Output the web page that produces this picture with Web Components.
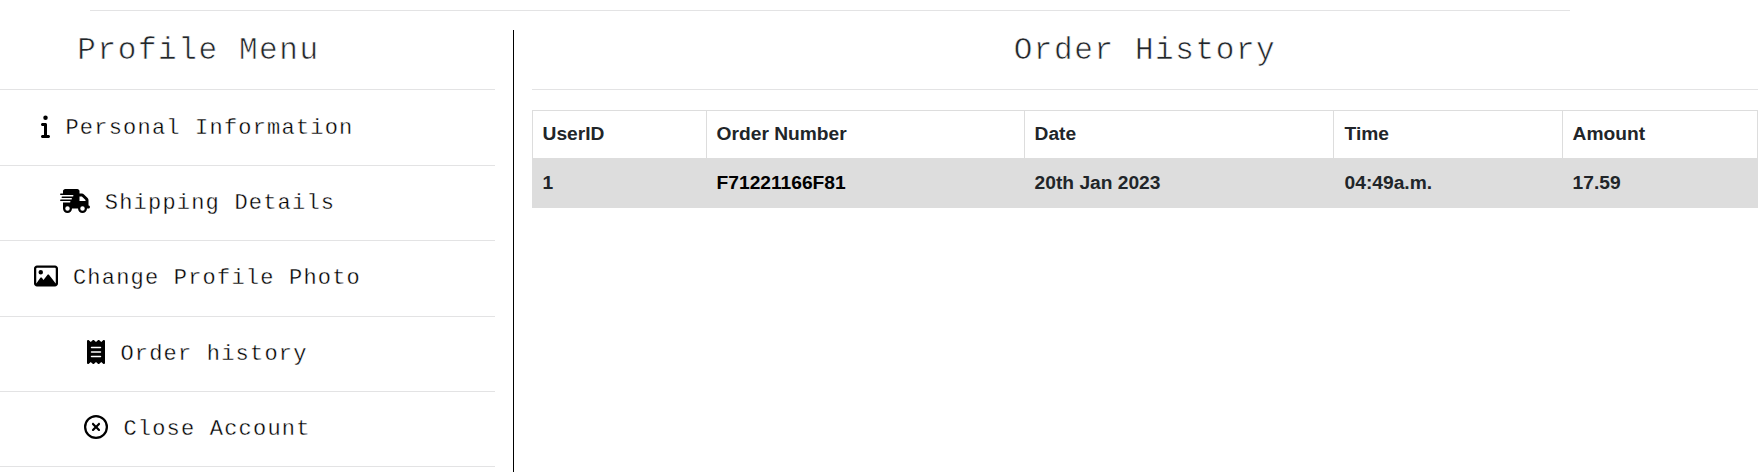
<!DOCTYPE html>
<html lang="en">
<head>
<meta charset="utf-8">
<title>Order History</title>
<style>
html, body { margin: 0; height: 100%; background: #fff; overflow: hidden; }
body { color: #212529; font-family: "Liberation Sans", Arial, sans-serif; }
</style>
</head>
<body>
<profile-page>
  <profile-menu slot="menu">
    <section-title slot="title">Profile Menu</section-title>
    <menu-item icon="info">Personal Information</menu-item>
    <menu-item icon="truck">Shipping Details</menu-item>
    <menu-item icon="image">Change Profile Photo</menu-item>
    <menu-item icon="receipt">Order history</menu-item>
    <menu-item icon="close">Close Account</menu-item>
  </profile-menu>
  <section-title slot="heading">Order History</section-title>
  <order-table></order-table>
</profile-page>
<script>
const shadow = (el, html) => { el.attachShadow({ mode: "open" }).innerHTML = html; };

const ICONS = {
  info: [192, "M48 80a48 48 0 1 1 96 0A48 48 0 1 1 48 80zM0 224c0-17.7 14.3-32 32-32H96c17.7 0 32 14.3 32 32V448h32c17.7 0 32 14.3 32 32s-14.3 32-32 32H32c-17.7 0-32-14.3-32-32s14.3-32 32-32H64V256H32c-17.7 0-32-14.3-32-32z"],
  truck: [640, "M112 0C85.5 0 64 21.5 64 48V96H16c-8.8 0-16 7.2-16 16s7.2 16 16 16H64 272c8.8 0 16 7.2 16 16s-7.2 16-16 16H64 48c-8.8 0-16 7.2-16 16s7.2 16 16 16H64 240c8.8 0 16 7.2 16 16s-7.2 16-16 16H64 16c-8.8 0-16 7.2-16 16s7.2 16 16 16H64 208c8.8 0 16 7.2 16 16s-7.2 16-16 16H64V416c0 53 43 96 96 96s96-43 96-96H384c0 53 43 96 96 96s96-43 96-96h32c17.7 0 32-14.3 32-32s-14.3-32-32-32V288 256 237.3c0-17-6.7-33.3-18.7-45.3L512 114.7c-12-12-28.3-18.7-45.3-18.7H416V48c0-26.5-21.5-48-48-48H112zM544 237.3V256H416V160h50.7L544 237.3zM160 368a48 48 0 1 1 0 96 48 48 0 1 1 0-96zm272 48a48 48 0 1 1 96 0 48 48 0 1 1 -96 0z"],
  image: [512, "M448 80c8.8 0 16 7.2 16 16V415.8l-5-6.5-136-176c-4.5-5.9-11.6-9.3-19-9.3s-14.4 3.4-19 9.3L202 340.7l-30.5-42.7C167 291.7 159.8 288 152 288s-15 3.7-19.5 10.1l-80 112L48 416.3l0-.3V96c0-8.8 7.2-16 16-16H448zM64 32C28.7 32 0 60.7 0 96V416c0 35.3 28.7 64 64 64H448c35.3 0 64-28.7 64-64V96c0-35.3-28.7-64-64-64H64zm80 192a48 48 0 1 0 0-96 48 48 0 1 0 0 96z"],
  receipt: [384, "M14 2.2C22.5-1.7 32.5-.3 39.6 5.8L80 40.4 120.4 5.8c9-7.7 22.3-7.7 31.2 0L192 40.4 232.4 5.8c9-7.7 22.3-7.7 31.2 0L304 40.4 344.4 5.8c7.1-6.1 17.1-7.5 25.6-3.6s14 12.4 14 21.8V488c0 9.4-5.5 17.9-14 21.8s-18.5 2.5-25.6-3.6L304 471.6l-40.4 34.6c-9 7.7-22.3 7.7-31.2 0L192 471.6l-40.4 34.6c-9 7.7-22.3 7.7-31.2 0L80 471.6 39.6 506.2c-7.1 6.1-17.1 7.5-25.6 3.6S0 497.4 0 488V24C0 14.6 5.5 6.1 14 2.2zM96 144c-8.8 0-16 7.2-16 16s7.2 16 16 16H288c8.8 0 16-7.2 16-16s-7.2-16-16-16H96zM80 352c0 8.8 7.2 16 16 16H288c8.8 0 16-7.2 16-16s-7.2-16-16-16H96c-8.8 0-16 7.2-16 16zM96 240c-8.8 0-16 7.2-16 16s7.2 16 16 16H288c8.8 0 16-7.2 16-16s-7.2-16-16-16H96z"],
  close: [512, "M256 48a208 208 0 1 1 0 416 208 208 0 1 1 0-416zm0 464A256 256 0 1 0 256 0a256 256 0 1 0 0 512zM175 175c-9.4 9.4-9.4 24.6 0 33.9l47 47-47 47c-9.4 9.4-9.4 24.6 0 33.9s24.6 9.4 33.9 0l47-47 47 47c9.4 9.4 24.6 9.4 33.9 0s9.4-24.6 0-33.9l-47-47 47-47c9.4-9.4 9.4-24.6 0-33.9s-24.6-9.4-33.9 0l-47 47-47-47c-9.4-9.4-24.6-9.4-33.9 0z"]
};

customElements.define("profile-page", class extends HTMLElement {
  constructor() {
    super();
    shadow(this, `<style>
      :host { display: flex; flex-direction: column; height: 100%; box-sizing: border-box; padding-top: 10px; }
      .rule { height: 1px; margin: 0 189px 19px 90px; background: #e3e3e4; flex: none; }
      .columns { flex: 1; display: grid; grid-template-columns: 495px 1px 1226px; column-gap: 18px; }
      .divider { background: #000; }
    </style>
    <div class="rule"></div>
    <div class="columns">
      <nav><slot name="menu"></slot></nav>
      <div class="divider"></div>
      <main><slot name="heading"></slot><slot></slot></main>
    </div>`);
  }
});

customElements.define("section-title", class extends HTMLElement {
  constructor() {
    super();
    shadow(this, `<style>
      :host { display: block; height: 59px; border-bottom: 1px solid #e3e3e4; }
      h2 { margin: 0; padding-right: var(--title-inset, 0); font: 400 31px/41px "Liberation Mono", "Courier New", monospace;
        letter-spacing: 1.6px; text-align: center; white-space: nowrap; -webkit-text-stroke: .6px #fff; }
    </style><h2><slot></slot></h2>`);
  }
});

customElements.define("profile-menu", class extends HTMLElement {
  constructor() {
    super();
    shadow(this, `<style>
      :host { display: block; --title-inset: 98px; }
      .items { padding-top: .75px; }
    </style><slot name="title"></slot><div class="items"><slot></slot></div>`);
  }
});

customElements.define("menu-item", class extends HTMLElement {
  constructor() {
    super();
    const [w, d] = ICONS[this.getAttribute("icon")];
    shadow(this, `<style>
      :host { display: block; height: 75.25px; box-sizing: border-box; border-bottom: 1px solid #e3e3e4; color: #000; }
      a { display: flex; justify-content: center; align-items: center; height: 73px; padding-right: 100px; gap: 15px; }
      svg { flex: none; height: 24px; margin-bottom: 3px; }
      span { padding-top: 3px; font: 22px/30px "Liberation Mono", "Courier New", monospace; letter-spacing: 1.2px; white-space: nowrap;
        -webkit-text-stroke: .35px #fff; }
    </style>
    <a><svg viewBox="0 0 ${w} 512" width="${w * 24 / 512}" fill="currentColor"><path d="${d}"/></svg><span><slot></slot></span></a>`);
  }
});

customElements.define("order-table", class extends HTMLElement {
  constructor() {
    super();
    shadow(this, `<style>
      :host { display: block; margin-top: 20px; }
      table { width: 1226px; table-layout: fixed; border-collapse: collapse; font: 700 19.2px/28px "Liberation Sans", Arial, sans-serif; }
      th, td { padding: 10px 9.6px; border: 1px solid #ddd; text-align: left; font-weight: 700; }
      th { padding-top: 9px; }
      td { background: #ddd; }
      .number { color: #000; }
      :is(th, td):nth-child(4) { padding-left: 10.6px; }
    </style>
    <table>
      <colgroup><col style="width:174px"><col style="width:318px"><col style="width:309px"><col style="width:229px"><col></colgroup>
      <thead><tr><th>UserID</th><th>Order Number</th><th>Date</th><th>Time</th><th>Amount</th></tr></thead>
      <tbody><tr><td>1</td><td class="number">F71221166F81</td><td>20th Jan 2023</td><td>04:49a.m.</td><td>17.59</td></tr></tbody>
    </table>`);
  }
});
</script>
</body>
</html>
